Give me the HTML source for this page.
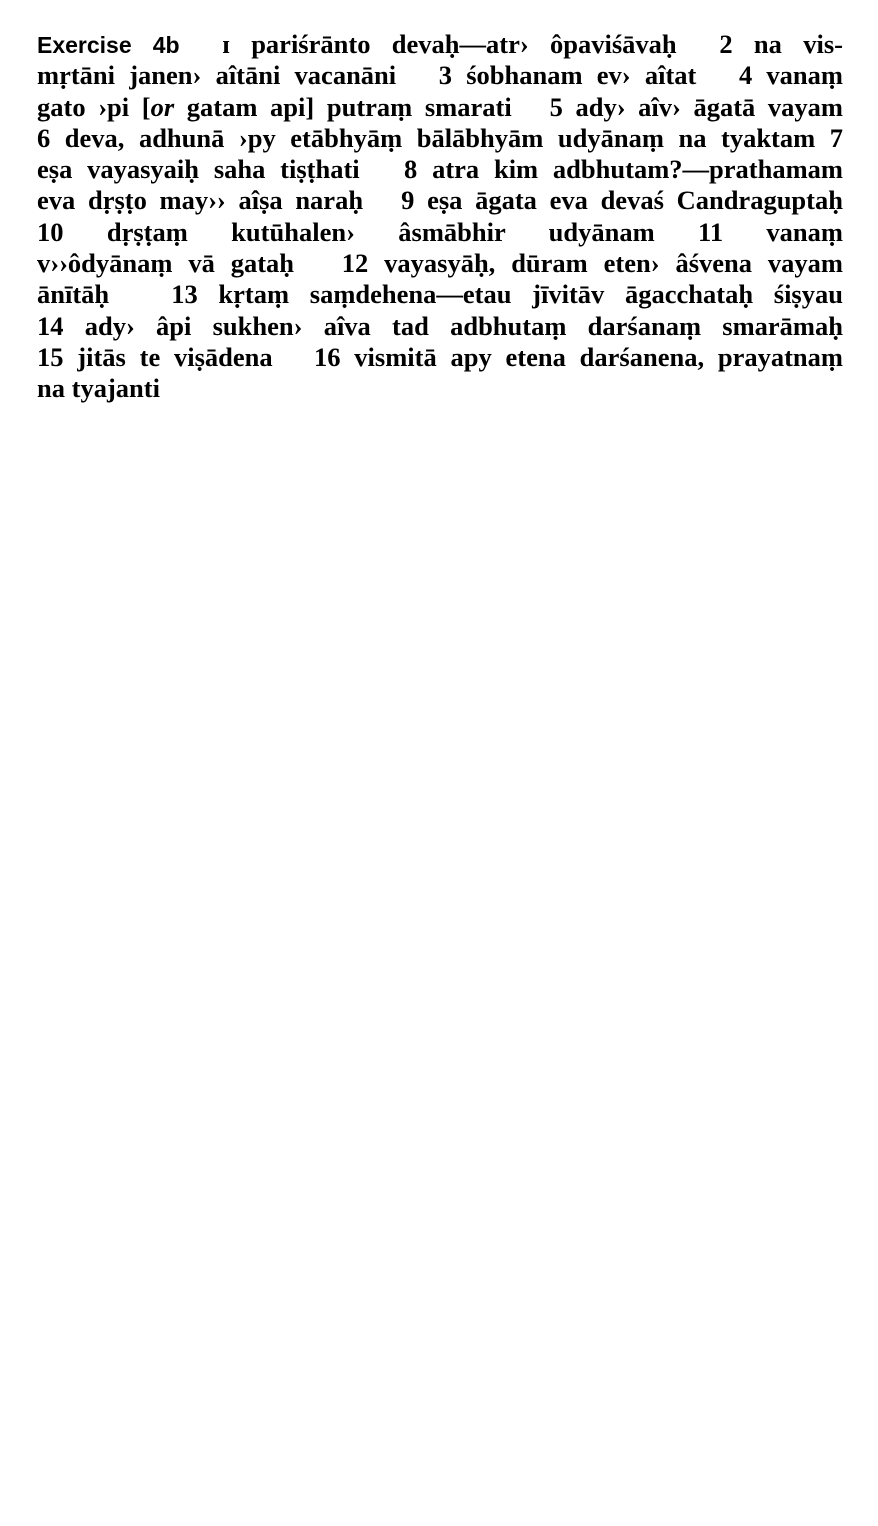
<!DOCTYPE html>
<html><head><meta charset="utf-8"><style>
html,body{margin:0;padding:0;background:#fff;}
body{width:878px;height:1526px;position:relative;overflow:hidden;}
.t{position:absolute;left:37px;top:29px;width:806px;font-family:"Liberation Serif","DejaVu Serif",serif;font-weight:bold;font-size:26.5px;line-height:31.3px;color:#000;}
.l{text-align:justify;text-align-last:justify;white-space:nowrap;height:31.3px;}
.l.last{text-align-last:left;}
.h{font-family:"Liberation Sans",sans-serif;font-weight:bold;font-size:23px;}
</style></head><body>
<div class="t">
<div class="l"><span class="h">Exercise 4b</span>&nbsp; ɪ pariśrānto devaḥ—atr› ôpaviśāvaḥ &nbsp;2 na vis-</div>
<div class="l">mṛtāni janen› aîtāni vacanāni &nbsp; 3 śobhanam ev› aîtat &nbsp; 4 vanaṃ</div>
<div class="l">gato ›pi [<i>or</i> gatam api] putraṃ smarati &nbsp; 5 ady› aîv› āgatā vayam</div>
<div class="l">6 deva, adhunā ›py etābhyāṃ bālābhyām udyānaṃ na tyaktam 7</div>
<div class="l">eṣa vayasyaiḥ saha tiṣṭhati &nbsp; 8 atra kim adbhutam?—prathamam</div>
<div class="l">eva dṛṣṭo may›› aîṣa naraḥ &nbsp; 9 eṣa āgata eva devaś Candraguptaḥ</div>
<div class="l">10 dṛṣṭaṃ kutūhalen› âsmābhir udyānam 11 vanaṃ</div>
<div class="l">v››ôdyānaṃ vā gataḥ &nbsp; 12 vayasyāḥ, dūram eten› âśvena vayam</div>
<div class="l">ānītāḥ &nbsp; 13 kṛtaṃ saṃdehena—etau jīvitāv āgacchataḥ śiṣyau</div>
<div class="l">14 ady› âpi sukhen› aîva tad adbhutaṃ darśanaṃ smarāmaḥ</div>
<div class="l">15 jitās te viṣādena &nbsp; 16 vismitā apy etena darśanena, prayatnaṃ</div>
<div class="l last">na tyajanti</div>
</div>
</body></html>
